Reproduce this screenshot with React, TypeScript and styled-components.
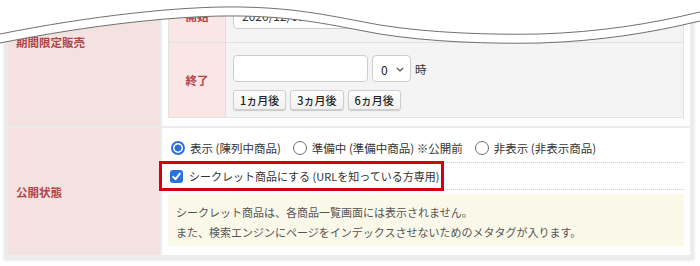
import styled, { createGlobalStyle } from 'styled-components';

const GlobalStyle = createGlobalStyle`
  html, body {
    margin: 0;
    padding: 0;
    background: #fff;
  }
  body {
    font-family: "Noto Sans CJK JP", "Noto Sans", sans-serif;
    color: #333;
  }
`;

function Chevron() {
  return (
    <svg width="8" height="5" viewBox="0 0 8 5">
      <path d="M0.8 0.8 L4 4 L7.2 0.8" fill="none" stroke="#444" strokeWidth="1.1" />
    </svg>
  );
}

function Check() {
  return (
    <svg width="11" height="11" viewBox="0 0 11 11">
      <path d="M2.2 5.8 L4.5 8.2 L8.9 2.6" fill="none" stroke="#fff" strokeWidth="1.9" strokeLinecap="round" strokeLinejoin="round" />
    </svg>
  );
}

const SHORTCUTS = ['1', '3', '6'];

const RADIOS = [
  { label: '表示 (陳列中商品)', checked: true },
  { label: '準備中 (準備中商品) ※公開前', checked: false },
  { label: '非表示 (非表示商品)', checked: false },
];

function App() {
  return (
    <Frame>
      <GlobalStyle />
      <Sheet>
        <HeadCell>期間限定販売</HeadCell>
        <BodyCell $pad="32px 6px 8px">
          <SubTable>
            <SubHead>開始</SubHead>
            <SubBody $pad="12px 7px 13px">
              <FieldRow>
                <DateInput value="2020/12/01 " readOnly />
                <HourSelect>
                  0
                  <Chevron />
                </HourSelect>
                <Unit>時</Unit>
              </FieldRow>
            </SubBody>
            <SubHead $last>終了</SubHead>
            <SubBody $last $pad="12px 7px 7px">
              <FieldRow>
                <DateInput value="" readOnly />
                <HourSelect>
                  0
                  <Chevron />
                </HourSelect>
                <Unit>時</Unit>
              </FieldRow>
              <ButtonRow>
                {SHORTCUTS.map((n) => (
                  <Shortcut key={n}>{`${n}ヵ月後`}</Shortcut>
                ))}
              </ButtonRow>
            </SubBody>
          </SubTable>
        </BodyCell>

        <HeadCell>公開状態</HeadCell>
        <BodyCell $pad="6px 6px 9px">
          <RadioRow>
            {RADIOS.map((r) => (
              <RadioItem key={r.label}>
                <Radio $checked={r.checked} />
                {r.label}
              </RadioItem>
            ))}
          </RadioRow>
          <SecretRow>
            <Highlight />
            <CheckBox>
              <Check />
            </CheckBox>
            <SecretText>シークレット商品にする (URLを知っている方専用)</SecretText>
          </SecretRow>
          <Note>
            シークレット商品は、各商品一覧画面には表示されません。
            <br />
            また、検索エンジンにページをインデックスさせないためのメタタグが入ります。
          </Note>
        </BodyCell>
      </Sheet>

      <Wave width="700" height="60" viewBox="0 0 700 60">
        <path
          d="M0 43 C90 25 180 15 240 16 C300 17 330 25 380 34 C430 42 490 44 540 43 C600 41 650 33 700 21 L700 0 L0 0 Z"
          fill="#fff"
        />
        <path
          d="M0 34 C90 16 180 6 240 7 C300 8 330 16 380 25 C430 33 490 35 540 34 C600 32 650 24 700 12"
          fill="none"
          stroke="#707070"
          strokeWidth="1"
        />
        <path
          d="M0 43 C90 25 180 15 240 16 C300 17 330 25 380 34 C430 42 490 44 540 43 C600 41 650 33 700 21"
          fill="none"
          stroke="#707070"
          strokeWidth="1"
        />
      </Wave>
    </Frame>
  );
}

export default App;

const Frame = styled.div`
  position: relative;
  width: 700px;
  height: 266px;
  overflow: hidden;
  background: #fff;
`;

const Sheet = styled.div`
  width: 690px;
  margin: -47px 0 0 4px;
  padding: 4px;
  box-sizing: border-box;
  display: grid;
  grid-template-columns: 152px 1fr;
  gap: 2px;
  background: #ececec;
  box-shadow: 0 1px 3px rgba(0, 0, 0, 0.12);
`;

const HeadCell = styled.div`
  display: flex;
  align-items: center;
  padding-left: 8px;
  background: #f4e2e1;
  color: #b04549;
  font-size: 11.5px;
  font-weight: bold;
`;

const BodyCell = styled.div<{ $pad: string }>`
  padding: ${(p) => p.$pad};
  background: #fff;
  font-size: 11.5px;
`;

const SubTable = styled.div`
  display: grid;
  grid-template-columns: 57px 1fr;
  border: 1px solid #e2e2e2;
`;

const SubHead = styled.div<{ $last?: boolean }>`
  display: flex;
  align-items: center;
  justify-content: center;
  background: #fbe6e6;
  color: #b04549;
  font-size: 11.5px;
  font-weight: bold;
  border-right: 1px solid #ebdada;
  border-bottom: ${(p) => (p.$last ? 'none' : '1px solid #e2e2e2')};
`;

const SubBody = styled.div<{ $last?: boolean; $pad: string }>`
  padding: ${(p) => p.$pad};
  background: #f4f4f4;
  border-bottom: ${(p) => (p.$last ? 'none' : '1px solid #e2e2e2')};
`;

const FieldRow = styled.div`
  display: flex;
  align-items: center;
  gap: 4px;
  height: 27px;
`;

const DateInput = styled.input`
  width: 135px;
  height: 27px;
  box-sizing: border-box;
  margin: 0;
  padding: 0 8px;
  border: 1px solid #cdcdcd;
  border-radius: 4px;
  background: #fff;
  font-family: inherit;
  font-size: 12px;
  color: #333;
  outline: none;
`;

const HourSelect = styled.div`
  width: 39px;
  height: 27px;
  box-sizing: border-box;
  display: flex;
  align-items: center;
  justify-content: space-between;
  padding: 1px 6px 0 8px;
  border: 1px solid #cdcdcd;
  border-radius: 4px;
  background: #fff;
  font-size: 12px;
  color: #222;
`;

const Unit = styled.span`
  font-size: 11.5px;
  color: #333;
`;

const ButtonRow = styled.div`
  display: flex;
  gap: 4px;
  margin-top: 8px;
`;

const Shortcut = styled.button`
  height: 20px;
  padding: 0 6px;
  border: 1px solid #cfcfcf;
  border-radius: 3px;
  background: linear-gradient(#fdfdfd, #f1f1f1);
  box-shadow: 0 1px 1px rgba(0, 0, 0, 0.18);
  font-family: inherit;
  font-size: 11px;
  font-weight: 500;
  color: #222;
  cursor: pointer;
`;

const RadioRow = styled.div`
  height: 27px;
  display: flex;
  align-items: center;
  gap: 12px;
  padding: 0 0 1px 3px;
  border-bottom: 1px dotted #c8c8c8;
`;

const RadioItem = styled.label`
  display: flex;
  align-items: center;
  gap: 5px;
  color: #333;
`;

const Radio = styled.span<{ $checked: boolean }>`
  width: 14px;
  height: 14px;
  box-sizing: border-box;
  border-radius: 50%;
  border: ${(p) => (p.$checked ? '2px solid #2d6fe0' : '1px solid #6e6e6e')};
  background: ${(p) =>
    p.$checked ? 'radial-gradient(circle, #2d6fe0 0 3.2px, #fff 3.8px)' : '#fff'};
`;

const SecretRow = styled.label`
  position: relative;
  height: 26px;
  display: flex;
  align-items: center;
  gap: 6px;
  padding-left: 2px;
  font-size: 11px;
  color: #333;
  border-bottom: 1px dotted #c8c8c8;
`;

const Highlight = styled.span`
  position: absolute;
  left: -9px;
  top: -2px;
  width: 285px;
  height: 30px;
  box-sizing: border-box;
  border: 3px solid #d7000f;
  background: #fff;
`;

const CheckBox = styled.span`
  position: relative;
  width: 13px;
  height: 13px;
  border-radius: 3px;
  background: #2c6fe0;
  display: flex;
  align-items: center;
  justify-content: center;
`;

const SecretText = styled.span`
  position: relative;
`;

const Note = styled.div`
  margin-top: 4px;
  padding: 8px 8px 4px;
  height: 52px;
  box-sizing: border-box;
  background: #faf8e9;
  font-size: 11px;
  line-height: 20px;
  color: #555;
`;

const Wave = styled.svg`
  position: absolute;
  top: 0;
  left: 0;
`;
